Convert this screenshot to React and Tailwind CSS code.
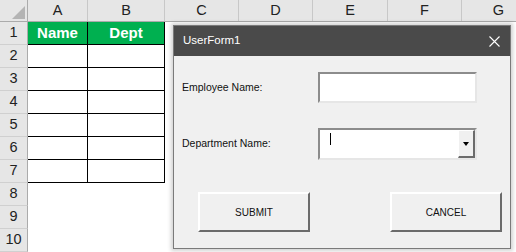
const cols = [
  { label: "A", w: "w-[60px]" },
  { label: "B", w: "w-[77px]" },
  { label: "C", w: "w-[74px]" },
  { label: "D", w: "w-[74px]" },
  { label: "E", w: "w-[75px]" },
  { label: "F", w: "w-[74px]" },
  { label: "G", w: "w-[74px]" },
];

const rows = [1, 2, 3, 4, 5, 6, 7, 8, 9, 10];

function Sheet() {
  return (
    <div className="flex flex-col bg-white">
      {/* column headers */}
      <div className="flex h-[22px] border-b border-[#ababab] bg-[#e6e6e6]">
        <div className="relative w-[28px] shrink-0 border-r border-[#ababab]">
          <div className="absolute right-[2px] bottom-[2px] w-0 h-0 border-l-[13px] border-l-transparent border-b-[13px] border-b-[#b4b4b4]" />
        </div>
        {cols.map((c) => (
          <div
            key={c.label}
            className={`${c.w} shrink-0 border-r border-[#c8c8c8] flex items-center justify-center text-[14.5px] text-[#222]`}
          >
            {c.label}
          </div>
        ))}
      </div>

      {rows.map((r) => (
        <div key={r} className="flex h-[23px]">
          <div className="w-[28px] shrink-0 bg-[#e6e6e6] border-r border-[#ababab] border-b border-b-[#d0d0d0] flex items-center justify-center text-[14.5px] text-[#222]">
            {r}
          </div>
          {r === 1 ? (
            <>
              <div className="w-[60px] shrink-0 bg-[#00b050] border-r border-b border-black flex items-center justify-center text-[15px] font-bold text-white">
                Name
              </div>
              <div className="w-[77px] shrink-0 bg-[#00b050] border-r border-b border-black flex items-center justify-center text-[15px] font-bold text-white">
                Dept
              </div>
            </>
          ) : r <= 7 ? (
            <>
              <div className="w-[60px] shrink-0 border-r border-b border-black" />
              <div className="w-[77px] shrink-0 border-r border-b border-black" />
            </>
          ) : null}
        </div>
      ))}
    </div>
  );
}

function UserForm() {
  return (
    <div className="absolute left-[173px] top-[25px] w-[338px] h-[224px] flex flex-col border border-[#7a7a7a] shadow-[0_0_4px_2px_rgba(0,0,0,0.18)]">
      {/* Title bar */}
      <div className="h-[30px] bg-[#4a4a4a] flex items-center justify-between pl-[9px] pr-[10px]">
        <span className="text-[11.5px] text-white">UserForm1</span>
        <svg width="11" height="11" viewBox="0 0 11 11">
          <path d="M0.5 0.5 L10.5 10.5 M10.5 0.5 L0.5 10.5" stroke="#fff" strokeWidth="1.1" />
        </svg>
      </div>

      {/* Body */}
      <div className="flex-1 bg-[#f0f0f0] flex flex-col text-[10.5px] text-[#111]">
        <div className="flex items-center mt-[16px] h-[31px]">
          <span className="w-[144px] pl-[8px]">Employee Name:</span>
          <div className="w-[159px] h-[31px] bg-white border-2 border-t-[#8c8c8c] border-l-[#8c8c8c] border-b-[#e6e6e6] border-r-[#e6e6e6]" />
        </div>

        <div className="flex items-center mt-[25px] h-[32px]">
          <span className="w-[144px] pl-[8px]">Department Name:</span>
          <div className="w-[159px] h-[32px] bg-white border-2 border-t-[#8c8c8c] border-l-[#8c8c8c] border-b-[#e6e6e6] border-r-[#e6e6e6] flex items-stretch">
            <div className="flex-1 pl-[10px] pt-[3px]">
              <div className="w-px h-[12px] bg-black" />
            </div>
            <div className="w-[17px] bg-[#f0f0f0] border border-t-white border-l-white border-b-2 border-r-2 border-b-[#6b6b6b] border-r-[#6b6b6b] flex items-center justify-center">
              <div className="w-0 h-0 border-l-[3.5px] border-r-[3.5px] border-t-[4px] border-l-transparent border-r-transparent border-t-black" />
            </div>
          </div>
        </div>

        <div className="flex mt-[32px] pl-[24px] gap-[80px]">
          <div className="w-[112px] h-[40px] border-2 border-t-white border-l-white border-b-[#6b6b6b] border-r-[#6b6b6b] flex items-center justify-center text-[10px]">
            SUBMIT
          </div>
          <div className="w-[112px] h-[40px] border-2 border-t-white border-l-white border-b-[#6b6b6b] border-r-[#6b6b6b] flex items-center justify-center text-[10px]">
            CANCEL
          </div>
        </div>
      </div>
    </div>
  );
}

export default function App() {
  return (
    <div
      className="relative w-[516px] h-[252px] overflow-hidden bg-white"
      style={{ fontFamily: '"Liberation Sans", Arial, sans-serif' }}
    >
      <Sheet />
      <UserForm />
    </div>
  );
}
